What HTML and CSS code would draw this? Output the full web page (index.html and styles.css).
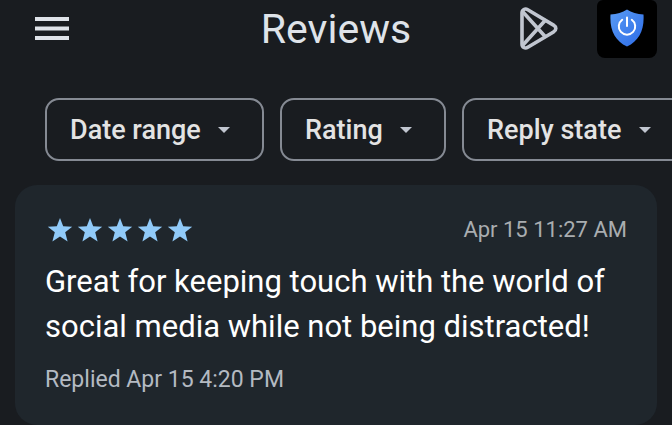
FILE: index.html
```
<!DOCTYPE html>
<html lang="en">
<head>
    <meta charset="UTF-8">
    <meta name="viewport" content="width=device-width, initial-scale=1.0">
    <title>Reviews</title>
    <link rel="stylesheet" href="styles.css">
</head>
<body>
    <header class="top-bar">
        <button class="icon-btn menu-btn" aria-label="Menu">
            <svg width="34" height="24" viewBox="0 0 34 24">
                <path d="M0 0h34v4H0zM0 9.500h34v4H0zM0 19h34v4H0z" fill="#dfe3e9"/>
            </svg>
        </button>
        <h1>Reviews</h1>
        <div class="actions">
            <button class="icon-btn" aria-label="Open in Play Store">
                <svg width="40" height="44" viewBox="0 0 40 44" fill="none" stroke="#c1c6d0" stroke-width="3.600" stroke-linejoin="round">
                    <path d="M3 6C3 2.700 6 1.100 8.800 2.700L34.500 18.100C37.600 20.100 37.600 23.100 34.500 25L8.800 40.300C6 41.900 3 40.300 3 37Z"/>
                    <path d="M3.500 4.500L27 30.500M3.500 38.500L27 12.500"/>
                </svg>
            </button>
            <button class="icon-btn app-icon" aria-label="Current app">
                <svg width="34" height="38" viewBox="0 0 34 38">
                    <defs>
                        <linearGradient id="shield" x1="0" y1="0" x2="1" y2="1">
                            <stop offset="0" stop-color="#5a9cf5"/>
                            <stop offset="1" stop-color="#2c6be6"/>
                        </linearGradient>
                    </defs>
                    <path d="M17 .5C21.500 3.500 27 5.200 33.500 5.500C34.500 21 29 32 17 37.500C5 32-.5 21 .5 5.500C7 5.200 12.500 3.500 17 .5Z" fill="url(#shield)"/>
                    <path d="M12.200 10.800A8.200 8.200 0 1 0 21.800 10.800M17 8.500V17" fill="none" stroke="#fff" stroke-width="2" stroke-linecap="round"/>
                </svg>
            </button>
        </div>
    </header>

    <main>
        <div class="filters">
            <label class="chip">
                <select aria-label="Date range"><option>Date range</option></select>
                <svg class="caret" width="12" height="6" viewBox="0 0 12 6"><path d="M0 0h12L6 6z"/></svg>
            </label>
            <label class="chip">
                <select aria-label="Rating"><option>Rating</option></select>
                <svg class="caret" width="12" height="6" viewBox="0 0 12 6"><path d="M0 0h12L6 6z"/></svg>
            </label>
            <label class="chip">
                <select aria-label="Reply state"><option>Reply state</option></select>
                <svg class="caret" width="12" height="6" viewBox="0 0 12 6"><path d="M0 0h12L6 6z"/></svg>
            </label>
        </div>

        <article class="review">
            <div class="review-head">
                <svg class="stars" width="150" height="24" viewBox="0 0 150 24" role="img" aria-label="5 out of 5 stars">
                    <defs>
                        <path id="star" d="M15 0L18.200 8.200L27.200 8.700L20.200 14.300L22.600 23.500L15 18.600L7.400 23.500L9.800 14.300L2.800 8.700L11.800 8.200Z"/>
                    </defs>
                    <use href="#star"/>
                    <use href="#star" x="30"/>
                    <use href="#star" x="60"/>
                    <use href="#star" x="90"/>
                    <use href="#star" x="120"/>
                </svg>
                <time>Apr 15 11:27 AM</time>
            </div>
            <p class="review-text">Great for keeping touch with the world of social media while not being distracted!</p>
            <p class="replied">Replied Apr 15 4:20 PM</p>
        </article>
    </main>
</body>
</html>
```
FILE: styles.css
```
* {
    margin: 0;
    padding: 0;
    box-sizing: border-box;
    font-family: Roboto, sans-serif;
}

body {
    background: #191c20;
    color: #dfe3e9;
    overflow-x: hidden;
}

.top-bar {
    display: grid;
    grid-template-columns: 1fr auto 1fr;
    align-items: center;
    padding: 0 15px;
}

.top-bar h1 {
    font-size: 41px;
    font-weight: 400;
    line-height: 56px;
}

.icon-btn {
    display: flex;
    align-items: center;
    justify-content: center;
    background: none;
    border: none;
    cursor: pointer;
}

.menu-btn {
    justify-self: start;
    padding: 0 20px;
}

.actions {
    display: flex;
    align-items: center;
    justify-content: flex-end;
    gap: 38px;
}

.app-icon {
    width: 60px;
    height: 58px;
    padding-bottom: 2px;
    background: #000;
    border-radius: 6px 6px 8px 8px;
}

.filters {
    display: flex;
    gap: 16px;
    margin-top: 40px;
    padding-left: 45px;
    overflow: hidden;
}

.chip {
    display: flex;
    flex-shrink: 0;
    align-items: center;
    gap: 17px;
    padding: 0 32px 0 23px;
    border: 2px solid #858a93;
    border-radius: 14px;
    cursor: pointer;
}

.chip select {
    appearance: none;
    background: none;
    border: none;
    color: #e3e3e3;
    font-size: 27px;
    font-weight: 500;
    line-height: 32px;
    height: 59px;
    cursor: pointer;
}

.caret {
    fill: #c1c6d0;
}

.review {
    margin: 24px 15px 0;
    padding: 30px;
    background: #1f262c;
    border-radius: 22px;
}

.review-head {
    display: flex;
    align-items: center;
    justify-content: space-between;
}

.stars {
    fill: #90caf9;
}

.review-head time {
    color: #a9adb0;
    font-size: 22px;
    line-height: 30px;
}

.review-text {
    margin-top: 14px;
    color: #fff;
    font-size: 31px;
    line-height: 45px;
}

.replied {
    margin-top: 16px;
    color: #b4bac2;
    font-size: 23px;
    line-height: 30px;
}
```
